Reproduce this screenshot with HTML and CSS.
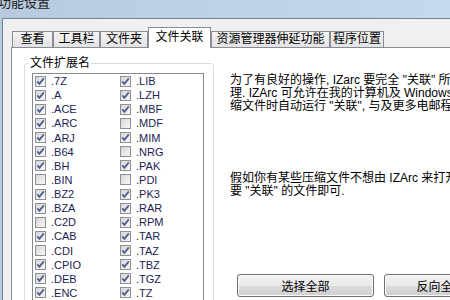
FILE: index.html
```html
<!DOCTYPE html>
<html>
<head lang="zh">
    <meta charset="UTF-8">
    <title>功能设置</title>
    <link rel="stylesheet" href="styles.css">
</head>
<body>
<svg class="defs">
    <symbol id="tick" viewBox="0 0 9 9">
        <path d="M1.3 4.4 L3.4 6.9 L7.8 1.4" fill="none" stroke="#4b5d8c" stroke-width="1.7"/>
    </symbol>
</svg>
<div class="window">
    <div class="titlebar"><span class="title">功能设置</span></div>
    <div class="client">
        <div class="tabs">
            <div class="tab tab-view">查看</div>
            <div class="tab tab-tools">工具栏</div>
            <div class="tab tab-folder">文件夹</div>
            <div class="tab tab-assoc active">文件关联</div>
            <div class="tab tab-shell">资源管理器伸延功能</div>
            <div class="tab tab-path">程序位置</div>
        </div>
        <div class="panel">
            <fieldset class="group">
                <legend>文件扩展名</legend>
                <div class="listbox">
                    <!-- 左列 -->
                    <div class="item"><span class="box"><svg><use href="#tick"/></svg></span>.7Z</div>
                    <div class="item"><span class="box"><svg><use href="#tick"/></svg></span>.A</div>
                    <div class="item"><span class="box"><svg><use href="#tick"/></svg></span>.ACE</div>
                    <div class="item"><span class="box"><svg><use href="#tick"/></svg></span>.ARC</div>
                    <div class="item"><span class="box"><svg><use href="#tick"/></svg></span>.ARJ</div>
                    <div class="item"><span class="box"><svg><use href="#tick"/></svg></span>.B64</div>
                    <div class="item"><span class="box"><svg><use href="#tick"/></svg></span>.BH</div>
                    <div class="item"><span class="box"></span>.BIN</div>
                    <div class="item"><span class="box"><svg><use href="#tick"/></svg></span>.BZ2</div>
                    <div class="item"><span class="box"><svg><use href="#tick"/></svg></span>.BZA</div>
                    <div class="item"><span class="box"></span>.C2D</div>
                    <div class="item"><span class="box"><svg><use href="#tick"/></svg></span>.CAB</div>
                    <div class="item"><span class="box"></span>.CDI</div>
                    <div class="item"><span class="box"><svg><use href="#tick"/></svg></span>.CPIO</div>
                    <div class="item"><span class="box"><svg><use href="#tick"/></svg></span>.DEB</div>
                    <div class="item"><span class="box"><svg><use href="#tick"/></svg></span>.ENC</div>
                    <!-- 右列 -->
                    <div class="item"><span class="box"><svg><use href="#tick"/></svg></span>.LIB</div>
                    <div class="item"><span class="box"><svg><use href="#tick"/></svg></span>.LZH</div>
                    <div class="item"><span class="box"><svg><use href="#tick"/></svg></span>.MBF</div>
                    <div class="item"><span class="box"></span>.MDF</div>
                    <div class="item"><span class="box"><svg><use href="#tick"/></svg></span>.MIM</div>
                    <div class="item"><span class="box"></span>.NRG</div>
                    <div class="item"><span class="box"><svg><use href="#tick"/></svg></span>.PAK</div>
                    <div class="item"><span class="box"></span>.PDI</div>
                    <div class="item"><span class="box"><svg><use href="#tick"/></svg></span>.PK3</div>
                    <div class="item"><span class="box"><svg><use href="#tick"/></svg></span>.RAR</div>
                    <div class="item"><span class="box"><svg><use href="#tick"/></svg></span>.RPM</div>
                    <div class="item"><span class="box"><svg><use href="#tick"/></svg></span>.TAR</div>
                    <div class="item"><span class="box"><svg><use href="#tick"/></svg></span>.TAZ</div>
                    <div class="item"><span class="box"><svg><use href="#tick"/></svg></span>.TBZ</div>
                    <div class="item"><span class="box"><svg><use href="#tick"/></svg></span>.TGZ</div>
                    <div class="item"><span class="box"><svg><use href="#tick"/></svg></span>.TZ</div>
                </div>
            </fieldset>
            <div class="side">
                <p class="note">为了有良好的操作, IZarc 要完全 "关联" 所有的压缩文件<br>理. IZArc 可允许在我的计算机及 Windows Explorer<br>缩文件时自动运行 "关联", 与及更多电邮程序</p>
                <p class="note note2">假如你有某些压缩文件不想由 IZArc 来打开<br>要 "关联" 的文件即可.</p>
                <div class="buttons">
                    <button class="btn">选择全部</button>
                    <button class="btn">反向全部选择</button>
                </div>
            </div>
        </div>
    </div>
</div>
</body>
</html>
```

FILE: styles.css
```css
*{
    padding: 0;
    margin: 0;
}
body{
    font-family: "Liberation Sans", "Noto Sans CJK SC", sans-serif;
    font-size: 12px;
    color: #000;
}
.defs{
    position: absolute;
    width: 0;
    height: 0;
}
.window{
    width: 450px;
    height: 300px;
    overflow: hidden;
    background: linear-gradient(to right, #b8cadf, #c4d8ee);
}
.titlebar{
    height: 18px;
    overflow: hidden;
}
.title{
    display: block;
    font-size: 13px;
    line-height: 13px;
    margin: -4px 0 0 -2px;
    color: #1b1b1b;
}
.client{
    margin-left: 2px;
    height: 282px;
    border-top: 1px solid #71849a;
    border-left: 1px solid #71849a;
    background: #f0f0f0;
}
/* 标签页 */
.tabs{
    display: flex;
    align-items: flex-end;
    height: 20px;
    margin-top: 8px;
    padding-left: 9px;
}
.tab{
    box-sizing: border-box;
    flex: none;
    height: 16px;
    line-height: 15px;
    border: 1px solid #898c95;
    border-bottom: 0;
    background: linear-gradient(#f4f4f4, #e3e3e3);
    text-align: center;
    white-space: nowrap;
}
.tab.active{
    height: 21px;
    line-height: 19px;
    margin-bottom: -1px;
    background: #fff;
    position: relative;
    z-index: 1;
}
.tab-view{ width: 41px; }
.tab-tools{ width: 47px; }
.tab-folder{ width: 48px; }
.tab-assoc{ width: 63px; }
.tab-shell{ width: 119px; }
.tab-path{ width: 54px; }

.panel{
    display: flex;
    width: 500px;
    height: 300px;
    margin-left: 8px;
    border: 1px solid #898c95;
    background: #fff;
}
/* 分组框 */
.group{
    box-sizing: border-box;
    flex: none;
    width: 190px;
    height: 260px;
    min-width: 0;
    margin: 8px 0 0 12px;
    padding: 0 9px 0 7px;
    border: 1px solid #d5dfe5;
    border-radius: 3px;
}
.group legend{
    margin-left: -3px;
    padding: 0 1px;
    line-height: 14px;
}
.listbox{
    display: grid;
    grid-auto-flow: column;
    grid-template-rows: repeat(16, 14.13px);
    grid-template-columns: 85px 85px;
    height: 240px;
    margin-top: 3px;
    padding-left: 2px;
    border: 1px solid #828790;
    background: #fff;
}
.item{
    display: flex;
    align-items: center;
    gap: 5px;
    font-size: 11px;
    color: #1c2250;
    white-space: nowrap;
}
.box{
    box-sizing: border-box;
    display: flex;
    flex: none;
    width: 11px;
    height: 11px;
    border: 1px solid #8f9094;
    background: linear-gradient(135deg, #d6d6d6, #f8f8f8);
}
.box svg{
    width: 9px;
    height: 9px;
}
/* 右侧说明 */
.side{
    margin-left: 16px;
    padding-top: 25.5px;
}
.note{
    line-height: 13px;
    white-space: nowrap;
}
.note2{
    margin-top: 59px;
}
.buttons{
    display: flex;
    gap: 10px;
    margin: 76.5px 0 0 7px;
}
.btn{
    box-sizing: border-box;
    flex: none;
    width: 137px;
    height: 23px;
    border: 1px solid #707070;
    border-radius: 3px;
    box-shadow: inset 0 0 0 1px #fbfbfb;
    background: linear-gradient(#f2f2f2 0%, #ebebeb 50%, #dcdcdc 50%, #cfcfcf 100%);
    font: 12px "Liberation Sans", "Noto Sans CJK SC", sans-serif;
    color: #000;
}
```
